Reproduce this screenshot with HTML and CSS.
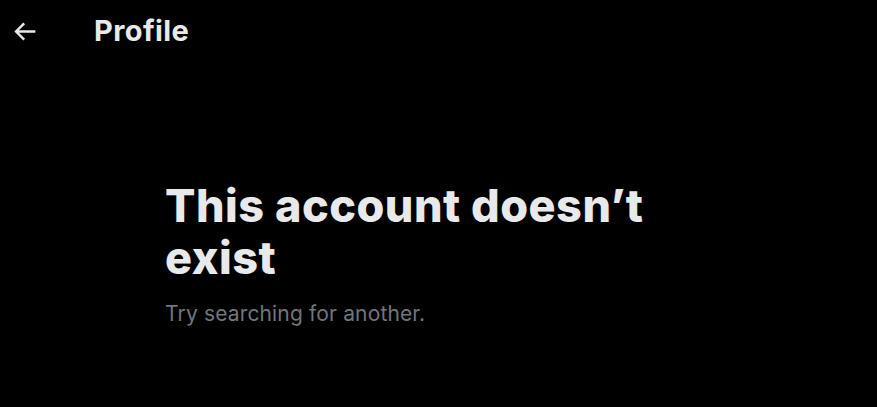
FILE: index.html
```html
<!DOCTYPE html>
<html lang="en">
<head>
<meta charset="utf-8">
<title>Profile</title>
<link rel="stylesheet" href="styles.css">
</head>
<body>
<header class="topbar">
  <div class="back">
    <svg viewBox="0 0 24 24" width="29" height="29" aria-hidden="true"><path fill="#e7e9ea" d="M7.414 13l5.043 5.04-1.414 1.42L3.586 12l7.457-7.46 1.414 1.42L7.414 11H21v2H7.414z"/></svg>
  </div>
  <h2 class="title">Profile</h2>
</header>
<main class="empty">
  <h1 class="heading">This account doesn’t exist</h1>
  <p class="sub">Try searching for another.</p>
</main>
</body>
</html>
```
FILE: styles.css
```css
html, body {
  margin: 0;
  padding: 0;
  background: #000;
  height: 100%;
}
body {
  font-family: Inter, "Noto Sans", sans-serif;
  color: #e7e9ea;
}
.topbar {
  display: flex;
  align-items: center;
  height: 62px;
  padding-left: 10px;
}
.back {
  width: 29px;
  height: 29px;
  display: flex;
}
.title {
  margin: 0 0 0 55px;
  font-size: 29px;
  font-weight: 700;
  line-height: 34px;
  letter-spacing: 0.4px;
}
.empty {
  padding: 118px 0 0 165px;
  width: 500px;
}
.heading {
  margin: 0;
  font-size: 45px;
  font-weight: 800;
  line-height: 52px;
  letter-spacing: 0.5px;
}
.sub {
  margin: 15px 0 0;
  font-size: 21px;
  line-height: 29px;
  letter-spacing: 0.15px;
  color: #71767b;
}
```
